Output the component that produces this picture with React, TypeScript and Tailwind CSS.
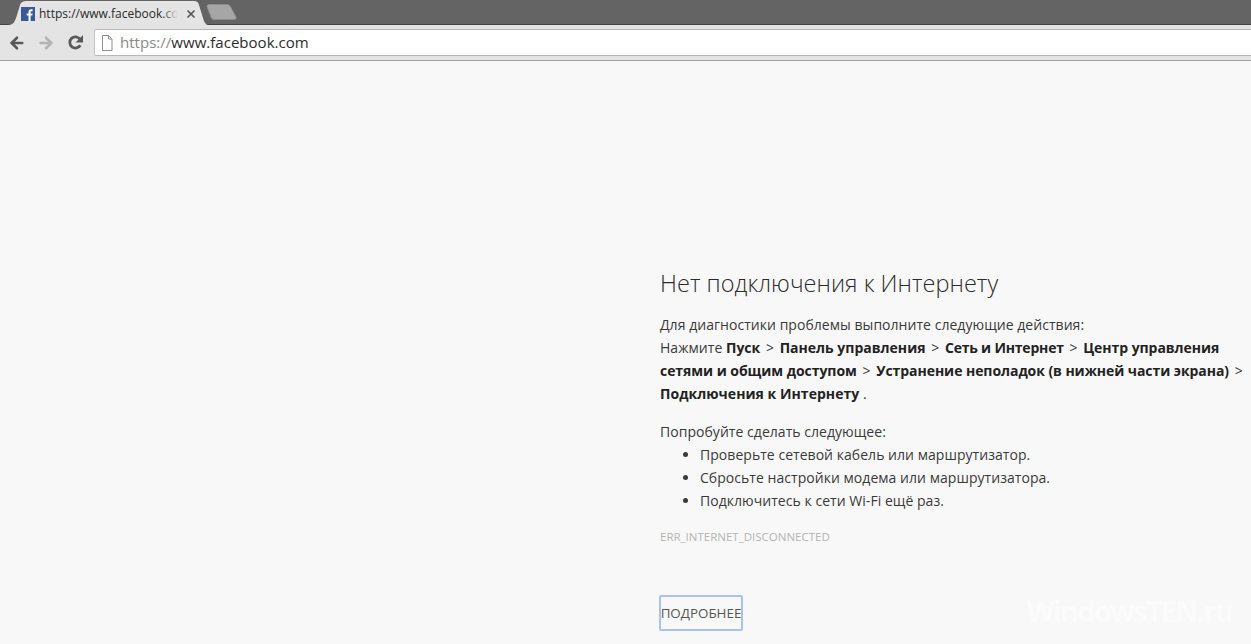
import { ArrowLeft, ArrowRight, X } from "lucide-react";

const sans = "font-['Open_Sans','Noto_Sans',sans-serif]";

function Favicon() {
  return (
    <svg width="14" height="14" viewBox="0 0 14 14" className="shrink-0">
      <rect width="14" height="14" fill="#3b5998" />
      <path d="M9.6 14V8.6h1.7l.3-2.1h-2V5.2c0-.6.2-1 1-1h1V2.3c-.2 0-.8-.1-1.500-.1-1.500 0-2.600.9-2.600 2.700v1.600H5.700v2.100h1.800V14z" fill="#fff" />
    </svg>
  );
}

function PageIcon() {
  return (
    <svg width="12" height="16" viewBox="0 0 12 16" className="shrink-0">
      <path d="M1.500.5h6l3.500 3.500v11.500h-9.500z" fill="#fff" stroke="#8f8f8f" />
      <path d="M7.500.5v3.500H11" fill="none" stroke="#8f8f8f" />
    </svg>
  );
}

function ReloadIcon() {
  return (
    <svg width="17" height="17" viewBox="0 0 17 17" className="ml-[12px] shrink-0">
      <path d="M13.300 11.200A5.600 5.600 0 1 1 13 5.200" fill="none" stroke="#585858" strokeWidth="2.800" />
      <path d="M16 1v7.500H8.500z" fill="#585858" />
    </svg>
  );
}

function TabStrip() {
  return (
    <div className="flex h-[25px] items-end border-b border-b-[#444444] bg-[#646464] pl-[8px]">
      <div className="relative flex h-[24px] w-[200px] shrink-0 items-center pl-[13px] pr-[10px] pt-[3px]">
        <svg width="200" height="25" viewBox="0 0 200 25" className="absolute left-0 top-0">
          <path d="M0 25C6 25 7 21 9 15L12 5C13 2 15 1 18 1H186C189 1 190 2 191 5L195 18C196 22 198 25 200 25z" fill="#e4e4e4" />
        </svg>
        <div className="relative flex w-full items-center">
          <Favicon />
          <span className={`relative ml-[4px] w-[139px] overflow-hidden whitespace-nowrap text-[12px] leading-[16px] text-[#2a2a2a] ${sans}`}>
            https://www.facebook.com
            <span className="absolute inset-y-0 right-0 w-[16px] bg-gradient-to-r from-transparent to-[#e4e4e4]" />
          </span>
          <X size={12} strokeWidth={3.500} className="ml-[7px] text-[#5a5a5a]" />
        </div>
      </div>
      <svg width="32" height="16" viewBox="0 0 32 16" className="mb-[4px] ml-[-2px] shrink-0">
        <path d="M1 2.500C1 1 2 .5 4 .5H21C23 .5 24 1.500 25 3.500L30 13C30.500 14.500 30 15.500 28 15.500H8C6.500 15.500 5.500 14.500 5 13z" fill="#a6a6a6" stroke="#8c8c8c" />
      </svg>
    </div>
  );
}

function Toolbar() {
  return (
    <div className="flex h-[36px] items-center border-b border-b-[#a0a0a0] bg-[#e4e4e4]">
      <div className="flex w-[94px] shrink-0 items-center pl-[8px]">
        <ArrowLeft size={18} strokeWidth={3.500} className="text-[#585858]" />
        <ArrowRight size={18} strokeWidth={3.500} className="ml-[11px] text-[#b4b4b4]" />
        <ReloadIcon />
      </div>
      <div className="flex h-[27px] flex-1 items-center gap-[7px] rounded-l-[2px] border-y border-l border-y-[#b8b8b8] border-l-[#c4c4c4] bg-white pl-[6px]">
        <PageIcon />
        <span className={`mt-[-2px] text-[15.050px] leading-[20px] text-[#2c2c2c] ${sans}`}>
          <span className="text-[#8a8a8a]">https://</span>www.facebook.com
        </span>
      </div>
    </div>
  );
}

function Sep() {
  return <span className="mx-[2px]">&gt;</span>;
}

export default function App() {
  return (
    <div className={`relative h-[644px] w-[1251px] overflow-hidden bg-[#f8f8f8] ${sans}`}>
      <TabStrip />
      <Toolbar />
      <main className="pl-[660px] pt-[206px] text-[14px] leading-[23px] tracking-[0.04px] text-[#3a3a3a]">
        <h1 className="text-[23.500px] font-light leading-[32px] text-[#2c2c2c]">Нет подключения к Интернету</h1>
        <p className="mt-[14px]">Для диагностики проблемы выполните следующие действия:</p>
        <p>
          Нажмите <b className="tracking-normal text-[#222222]">Пуск</b> <Sep /> <b className="tracking-normal text-[#222222]">Панель управления</b> <Sep />{" "}
          <b className="tracking-[-0.200px] text-[#222222]">Сеть и Интернет</b> <Sep />{" "}
          <b className="tracking-[-0.050px] text-[#222222]">Центр управления сетями и общим доступом</b> <Sep />{" "}
          <b className="tracking-[-0.060px] text-[#222222]">Устранение неполадок (в нижней части экрана)</b> <Sep />{" "}
          <b className="text-[#222222]">Подключения к Интернету</b> .
        </p>
        <p className="mt-[15px]">Попробуйте сделать следующее:</p>
        <ul className="list-disc pl-[40px]">
          <li>Проверьте сетевой кабель или маршрутизатор.</li>
          <li>Сбросьте настройки модема или маршрутизатора.</li>
          <li>Подключитесь к сети Wi-Fi ещё раз.</li>
        </ul>
        <p className="mt-[13px] text-[11.500px] leading-[23px] tracking-normal text-[#b4b4b4]">ERR_INTERNET_DISCONNECTED</p>
        <button className="ml-[-1px] mt-[47px] flex h-[36px] w-[84px] items-center justify-center rounded-[2px] border-2 border-[#a9c2e8] text-[13.400px] tracking-normal text-[#555555]">
          ПОДРОБНЕЕ
        </button>
      </main>
      <span className="absolute bottom-[15px] right-[19px] text-[29px] font-bold leading-[36px] tracking-[-1.800px] text-[#fbfbfb]">WindowsTEN.ru</span>
    </div>
  );
}
